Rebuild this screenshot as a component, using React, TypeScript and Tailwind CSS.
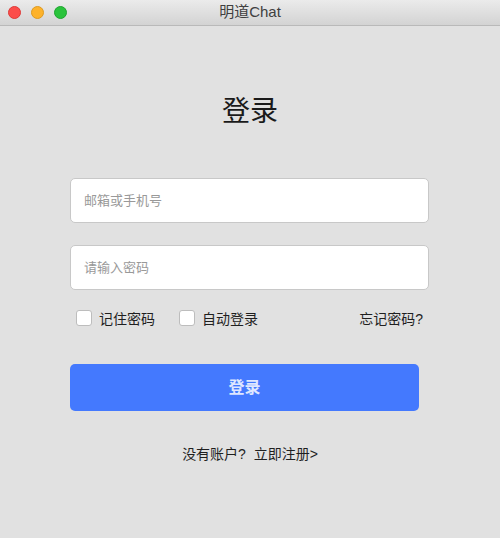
export default function App() {
  return (
    <div
      className="w-[500px] h-[538px] bg-[#e1e1e1] flex flex-col overflow-hidden"
      style={{ fontFamily: '"Liberation Sans", "Noto Sans CJK SC", sans-serif' }}
    >
      {/* title bar */}
      <div className="relative h-[26px] shrink-0 bg-gradient-to-b from-[#ebebeb] to-[#d3d3d3] border-b border-[#b9b9b9] flex items-center">
        <div className="flex items-center gap-[10px] pl-[8px]">
          <span className="w-[13px] h-[13px] rounded-full bg-[#fc4d4a] border border-[#de3a37]" />
          <span className="w-[13px] h-[13px] rounded-full bg-[#fdb22b] border border-[#de9a1f]" />
          <span className="w-[13px] h-[13px] rounded-full bg-[#2ac33c] border border-[#1ea42f]" />
        </div>
        <span className="absolute inset-x-0 text-center text-[15px] text-[#404040]">明道Chat</span>
      </div>

      <div className="flex flex-col px-[70px]">
        <h1 className="mt-[68px] text-center text-[28px] leading-[36px] text-[#1a1a1a]">登录</h1>

        <input
          className="mt-[48px] h-[45px] w-[359px] rounded-[5px] bg-white border border-[#c8c8c8] px-[13px] text-[13px] placeholder:text-[#999] outline-none"
          placeholder="邮箱或手机号"
        />
        <input
          type="password"
          className="mt-[22px] h-[45px] w-[359px] rounded-[5px] bg-white border border-[#c8c8c8] px-[13px] text-[13px] placeholder:text-[#999] outline-none"
          placeholder="请输入密码"
        />

        <div className="mt-[19px] flex items-center text-[14px] text-[#1f1f1f] pl-[6px] pr-[7px]">
          <label className="flex items-center gap-[7px]">
            <span className="w-[16px] h-[16px] rounded-[3px] bg-white border border-[#bdbdbd] -mt-[4px]" />
            记住密码
          </label>
          <label className="ml-[24px] flex items-center gap-[7px]">
            <span className="w-[16px] h-[16px] rounded-[3px] bg-white border border-[#bdbdbd] -mt-[4px]" />
            自动登录
          </label>
          <span className="ml-auto">忘记密码?</span>
        </div>

        <button className="mt-[34px] h-[47px] w-[349px] rounded-[5px] bg-[#4479fe] text-[16px] font-bold text-[#dfe7ff]">
          登录
        </button>

        <p className="mt-[33px] text-center text-[14px] text-[#1f1f1f]">没有账户?&nbsp; 立即注册&gt;</p>
      </div>
    </div>
  )
}
